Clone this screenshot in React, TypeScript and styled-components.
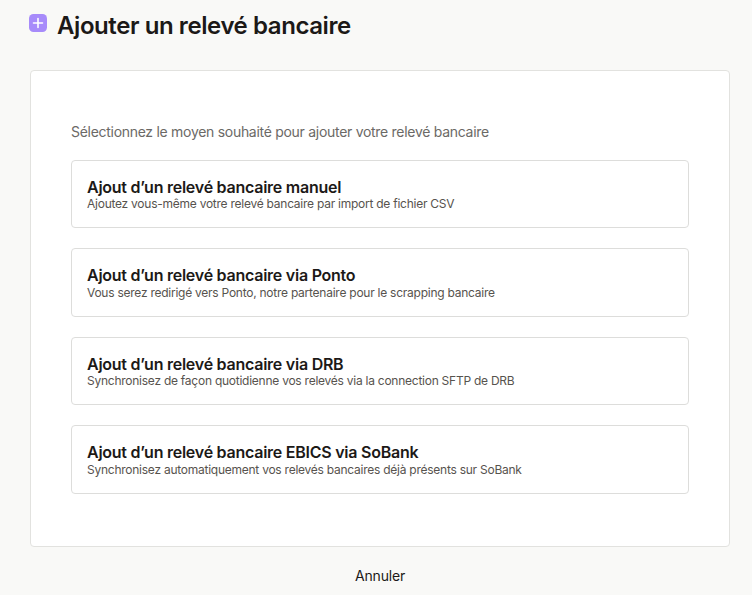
import React from 'react';
import styled, { createGlobalStyle } from 'styled-components';

const options = [
  {
    title: 'Ajout d’un relevé bancaire manuel',
    text: 'Ajoutez vous-même votre relevé bancaire par import de fichier CSV',
  },
  {
    title: 'Ajout d’un relevé bancaire via Ponto',
    text: 'Vous serez redirigé vers Ponto, notre partenaire pour le scrapping bancaire',
  },
  {
    title: 'Ajout d’un relevé bancaire via DRB',
    text: 'Synchronisez de façon quotidienne vos relevés via la connection SFTP de DRB',
  },
  {
    title: 'Ajout d’un relevé bancaire EBICS via SoBank',
    text: 'Synchronisez automatiquement vos relevés bancaires déjà présents sur SoBank',
  },
];

const App = () => {
  return (
    <>
      <GlobalStyle />
      <Page>
        <Header>
          <PlusIcon width="18" height="18" viewBox="0 0 18 18">
            <rect width="18" height="18" rx="4.5" fill="#a78bfa" />
            <path d="M9 4.5v9M4.5 9h9" stroke="#fff" strokeWidth="1.6" strokeLinecap="round" />
          </PlusIcon>
          <Title>Ajouter un relevé bancaire</Title>
        </Header>
        <Card>
          <Intro>Sélectionnez le moyen souhaité pour ajouter votre relevé bancaire</Intro>
          <OptionList>
            {options.map((option) => (
              <Option key={option.title}>
                <OptionTitle>{option.title}</OptionTitle>
                <OptionText>{option.text}</OptionText>
              </Option>
            ))}
          </OptionList>
        </Card>
        <Footer>
          <CancelButton>Annuler</CancelButton>
        </Footer>
      </Page>
    </>
  );
};

export default App;

const GlobalStyle = createGlobalStyle`
  html, body {
    margin: 0;
    padding: 0;
    background: #f9f9f7;
  }
  * {
    box-sizing: border-box;
  }
`;

const Page = styled.div`
  width: 752px;
  height: 595px;
  padding: 14px 22px 0 30px;
  overflow: hidden;
  font-family: Inter, 'Liberation Sans', sans-serif;
  color: #1c1917;
`;

const Header = styled.div`
  display: flex;
  align-items: flex-start;
  height: 56px;
  margin-left: -1px;
`;

const PlusIcon = styled.svg`
  flex: none;
  margin-right: 10px;
`;

const Title = styled.h1`
  margin: -3px 0 0;
  font-size: 24px;
  line-height: 30px;
  font-weight: 600;
  letter-spacing: -0.42px;
`;

const Card = styled.div`
  height: 477px;
  padding: 52px 40px 0;
  background: #fff;
  border: 1px solid #e2e2df;
  border-radius: 4px;
`;

const Intro = styled.p`
  margin: 0 0 19.75px;
  font-size: 14px;
  line-height: 17px;
  letter-spacing: -0.29px;
  color: #6b6966;
`;

const OptionList = styled.div`
  display: flex;
  flex-direction: column;
  gap: 20px;
`;

const Option = styled.div`
  height: 68.5px;
  padding: 17px 15px 0;
  background: #fff;
  border: 1px solid #dddddb;
  border-radius: 4px;
`;

const OptionTitle = styled.div`
  font-size: 16px;
  line-height: 19px;
  font-weight: 600;
  letter-spacing: -0.25px;
`;

const OptionText = styled.div`
  margin-top: 0.5px;
  font-size: 12px;
  line-height: 14px;
  letter-spacing: -0.25px;
  color: #57534e;
`;

const Footer = styled.div`
  display: flex;
  justify-content: center;
  padding-top: 20px;
`;

const CancelButton = styled.button`
  padding: 0;
  background: none;
  border: 0;
  font-family: inherit;
  font-size: 14px;
  line-height: 17px;
  font-weight: 400;
  letter-spacing: -0.2px;
  color: #1c1917;
`;
